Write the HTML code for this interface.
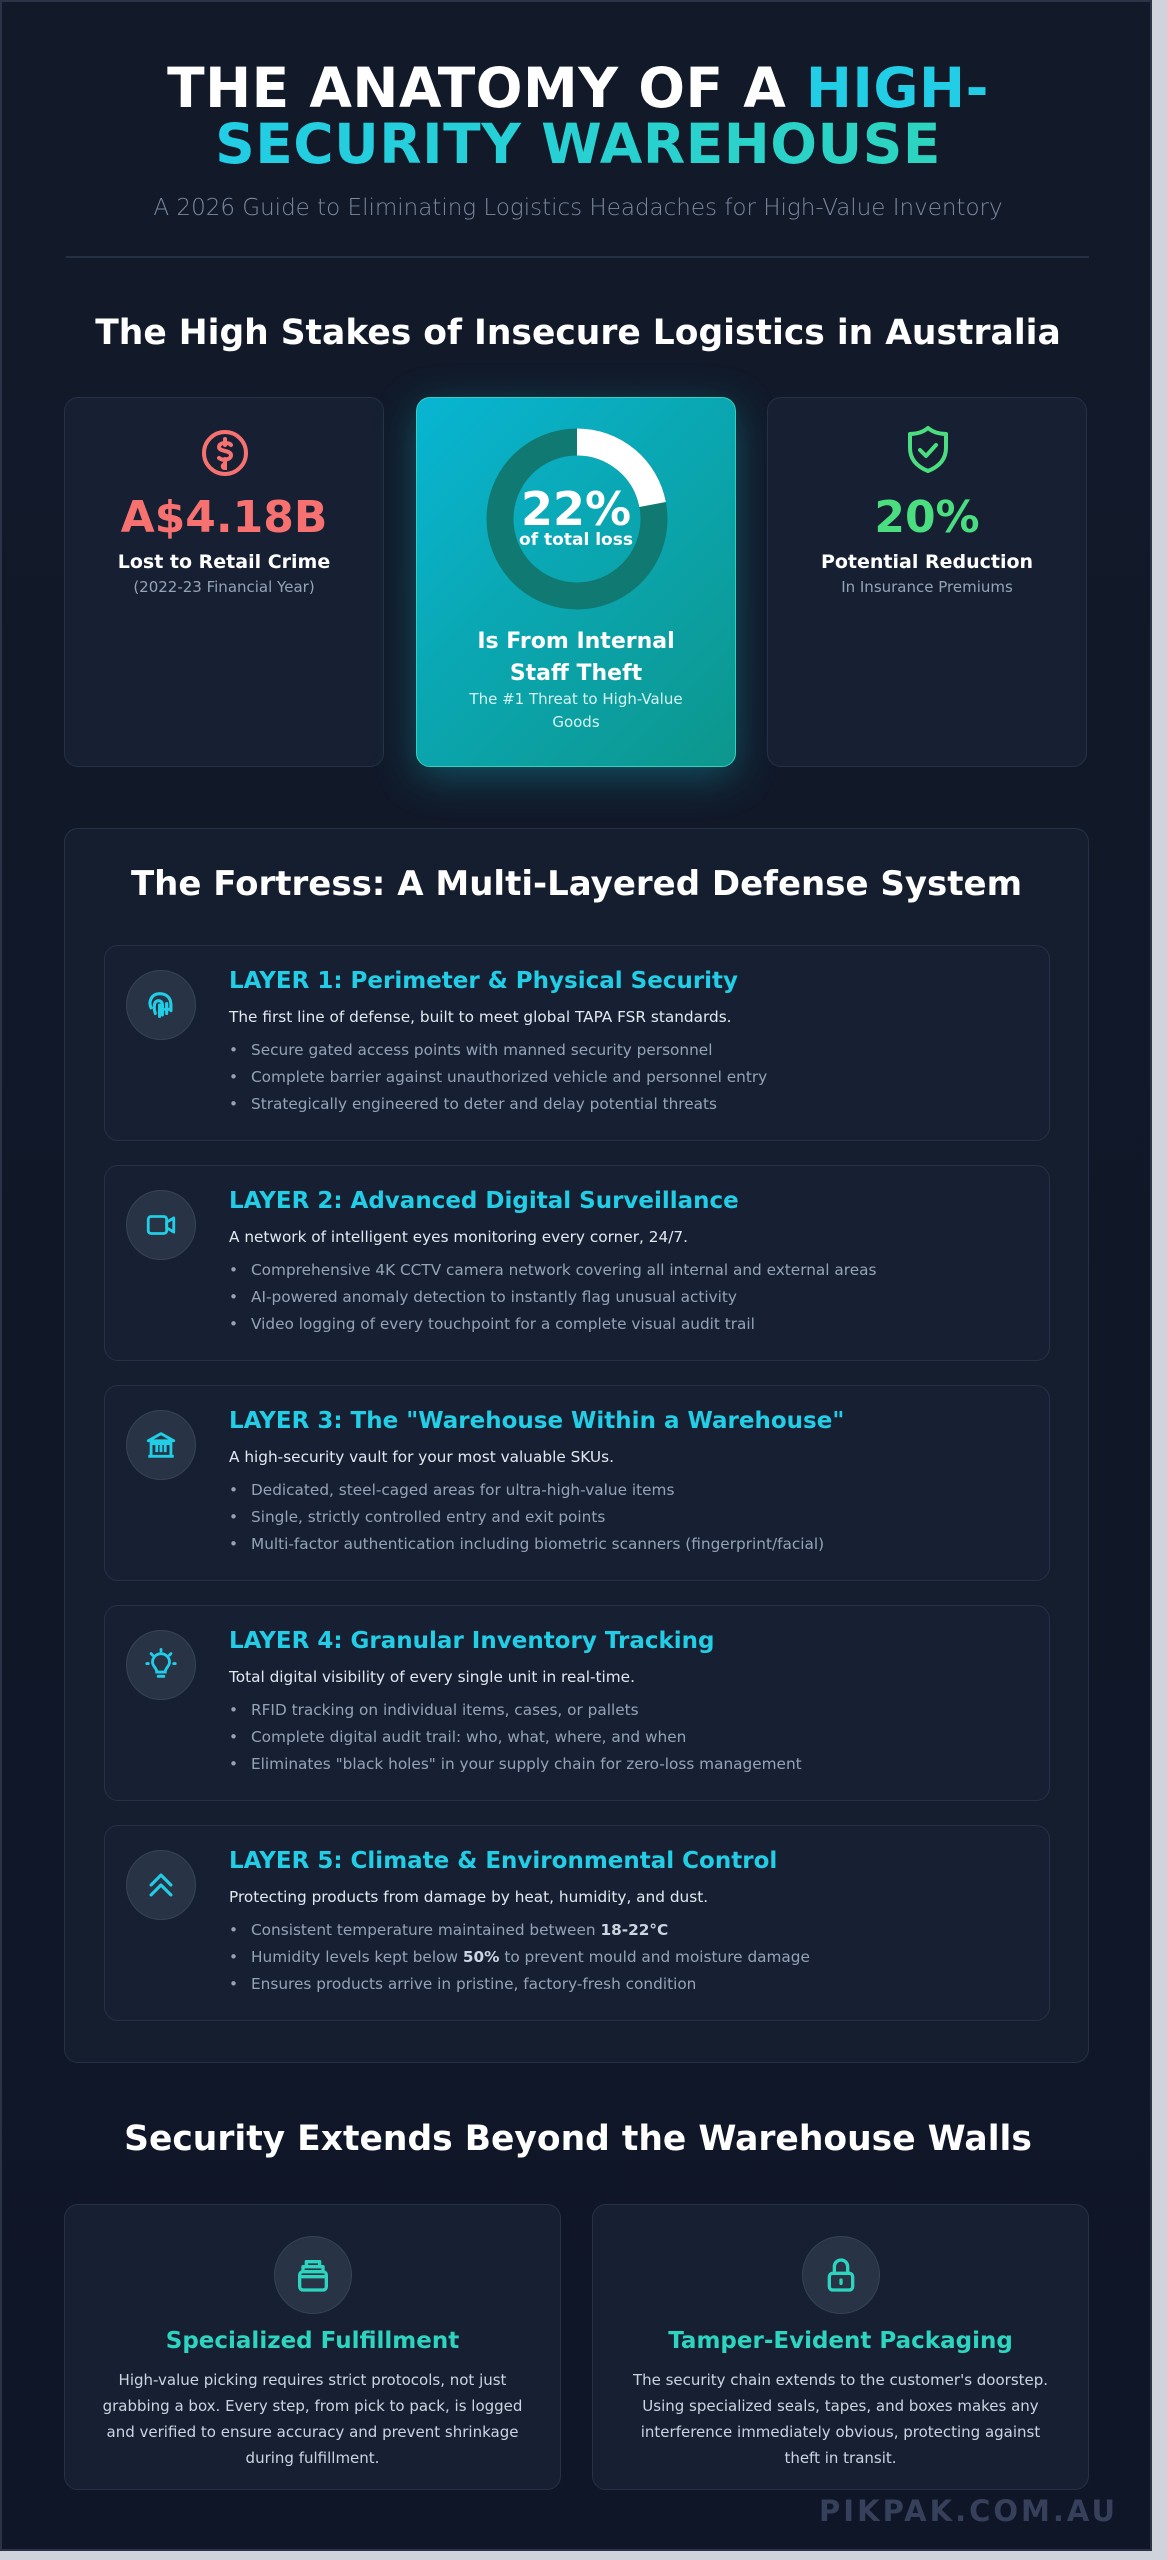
<!DOCTYPE html>
<html><head><meta charset="utf-8"><style>
*{box-sizing:border-box;margin:0;padding:0}
html,body{width:1167px;height:2560px;background:#cfd4dc;overflow:hidden}
body{font-family:"DejaVu Sans","Liberation Sans",sans-serif;position:relative}
.page{position:absolute;left:0;top:0;width:1152px;height:2551px;background:linear-gradient(#121a2a,#0f1627);border:2px solid #2a3446;color:#fff}
.abs{position:absolute}
h1{position:absolute;left:0;width:1152px;top:58px;text-align:center;font-size:55px;line-height:56px;font-weight:bold;letter-spacing:0.5px}
.cy{color:#22cde6}
.sub{top:193px;left:0;width:1152px;text-align:center;font-size:23px;color:#7b8aa0;font-weight:300}
.hr{left:64px;width:1023px;top:254px;height:2px;background:#263043}
h2{position:absolute;left:0;width:1152px;text-align:center;font-size:34.5px;font-weight:bold}
.card{position:absolute;background:#172033;border:1.5px solid #263147;border-radius:14px}
.stat{top:395px;width:320px;height:370px}
.num{position:absolute;left:0;width:100%;text-align:center;font-size:44px;font-weight:bold}
.lbl{position:absolute;left:0;width:100%;text-align:center;font-size:19px;font-weight:bold}
.sml{position:absolute;left:0;width:100%;text-align:center;font-size:15px;color:#94a3b8}
.teal{background:linear-gradient(135deg,#08b5d2,#0d968c);border:1.5px solid #2dd4bf;box-shadow:0 10px 40px rgba(20,184,200,0.35)}
.layer{left:102px;width:946px;height:196px}
.ic{position:absolute;left:21px;top:24px;width:70px;height:70px;border-radius:50%;background:#283446;border:1.5px solid #364357;display:flex;align-items:center;justify-content:center}
.lt{position:absolute;left:124px;top:22px;font-size:23px;font-weight:bold;color:#22cde6}
.ld{position:absolute;left:124px;top:62px;font-size:15.3px;color:#e2e8f0}
.lb{position:absolute;left:124px;top:91px;font-size:15.3px;color:#94a3b8;line-height:27px;list-style:none}
.lb li:before{content:"•";display:inline-block;width:22px;color:#94a3b8}
.lb b{color:#cbd5e1}
.bc{top:2202px;height:286px}
.bic{position:absolute;left:50%;top:31px;margin-left:-39px;width:78px;height:78px;border-radius:50%;background:#283446;border:1.5px solid #364357;display:flex;align-items:center;justify-content:center}
.bt{position:absolute;left:0;width:100%;top:123px;text-align:center;font-size:23px;font-weight:bold;color:#2dd4bf}
.bp{position:absolute;left:30px;right:30px;top:162px;text-align:center;font-size:15px;line-height:26px;color:#cbd5e1}
</style></head><body>
<div class="page">
<h1>THE ANATOMY OF A <span class="cy">HIGH-</span><br><span style="background:linear-gradient(90deg,#22cde6,#2dd4bf);-webkit-background-clip:text;color:transparent">SECURITY WAREHOUSE</span></h1>
<div class="abs sub">A 2026 Guide to Eliminating Logistics Headaches for High-Value Inventory</div>
<div class="abs hr"></div>
<h2 style="top:311px">The High Stakes of Insecure Logistics in Australia</h2>

<div class="card stat" style="left:62px">
 <svg class="abs" style="left:135px;top:30px" width="50" height="50" viewBox="0 0 50 50" fill="none" stroke="#f87171" stroke-width="4" stroke-linecap="round"><circle cx="25" cy="25" r="21"/><path d="M31 17c-2-3-12-3-12 2s12 3 12 8-8 6-12 3M25 11v6M25 31v9c-3 0-3-3 0-4"/></svg>
 <div class="num" style="top:94px;color:#f87171">A$4.18B</div>
 <div class="lbl" style="top:153px">Lost to Retail Crime</div>
 <div class="sml" style="top:180px">(2022-23 Financial Year)</div>
</div>

<div class="card stat teal" style="left:414px">
 <svg class="abs" style="left:69px;top:30px" width="182" height="182" viewBox="0 0 182 182"><circle cx="91" cy="91" r="77" fill="none" stroke="#107a72" stroke-width="27"/><path d="M91 14 A77 77 0 0 1 166.6 76.5" fill="none" stroke="#fff" stroke-width="27"/></svg>
 <div class="num" style="top:84px;font-size:46px;color:#fff">22%</div>
 <div class="lbl" style="top:132px;font-size:17px">of total loss</div>
 <div class="lbl" style="top:228px;font-size:22px;line-height:32px">Is From Internal<br>Staff Theft</div>
 <div class="sml" style="top:290px;color:#d6f5f3;line-height:23px;padding:0 40px">The #1 Threat to High-Value Goods</div>
</div>

<div class="card stat" style="left:765px">
 <svg class="abs" style="left:134px;top:26px" width="52" height="52" viewBox="0 0 52 52" fill="none" stroke="#4ade80" stroke-width="4" stroke-linejoin="round" stroke-linecap="round"><path d="M26 4c6 5 12 6 18 6v14c0 12-8 19-18 23C16 43 8 36 8 24V10c6 0 12-1 18-6z"/><path d="M18 26l6 6 10-11"/></svg>
 <div class="num" style="top:94px;color:#4ade80">20%</div>
 <div class="lbl" style="top:153px">Potential Reduction</div>
 <div class="sml" style="top:180px">In Insurance Premiums</div>
</div>

<div class="card" style="left:62px;top:826px;width:1025px;height:1235px;background:#151e2f">
 <h2 style="left:0;width:100%;top:35px;font-size:34px">The Fortress: A Multi-Layered Defense System</h2>
</div>

<div class="card layer" style="top:943px">
 <div class="ic"><svg width="34" height="34" viewBox="0 0 24 24" fill="none" stroke="#22cde6" stroke-width="2.2" stroke-linecap="round"><path d="M5 14c-2-4 0-10 6-10 5 0 8 3 8 8v4M8 18c-1-3-1-6 0-8 2-2 5-1 5 2v7M11 12v8M16 11v7M15 15h4"/></svg></div>
 <div class="lt">LAYER 1: Perimeter &amp; Physical Security</div>
 <div class="ld">The first line of defense, built to meet global TAPA FSR standards.</div>
 <ul class="lb"><li>Secure gated access points with manned security personnel</li><li>Complete barrier against unauthorized vehicle and personnel entry</li><li>Strategically engineered to deter and delay potential threats</li></ul>
</div>
<div class="card layer" style="top:1163px">
 <div class="ic"><svg width="34" height="34" viewBox="0 0 24 24" fill="none" stroke="#22cde6" stroke-width="2" stroke-linejoin="round"><rect x="3" y="6" width="13" height="12" rx="2"/><path d="M16 10l5-3v10l-5-3z"/></svg></div>
 <div class="lt">LAYER 2: Advanced Digital Surveillance</div>
 <div class="ld">A network of intelligent eyes monitoring every corner, 24/7.</div>
 <ul class="lb"><li>Comprehensive 4K CCTV camera network covering all internal and external areas</li><li>AI-powered anomaly detection to instantly flag unusual activity</li><li>Video logging of every touchpoint for a complete visual audit trail</li></ul>
</div>
<div class="card layer" style="top:1383px">
 <div class="ic"><svg width="34" height="34" viewBox="0 0 24 24" fill="none" stroke="#22cde6" stroke-width="2" stroke-linejoin="round"><path d="M3 9l9-5 9 5zM3 20h18M5 9v11M19 9v11M9 12v5M12 12v5M15 12v5M5 11h14"/></svg></div>
 <div class="lt">LAYER 3: The "Warehouse Within a Warehouse"</div>
 <div class="ld">A high-security vault for your most valuable SKUs.</div>
 <ul class="lb"><li>Dedicated, steel-caged areas for ultra-high-value items</li><li>Single, strictly controlled entry and exit points</li><li>Multi-factor authentication including biometric scanners (fingerprint/facial)</li></ul>
</div>
<div class="card layer" style="top:1603px">
 <div class="ic"><svg width="34" height="34" viewBox="0 0 24 24" fill="none" stroke="#22cde6" stroke-width="2" stroke-linecap="round"><path d="M9 17c0-3-3-4-3-7a6 6 0 0 1 12 0c0 3-3 4-3 7zM10 20h4M2 11h1M21 11h1M5 4l1 1M19 4l-1 1M12 1v1"/></svg></div>
 <div class="lt">LAYER 4: Granular Inventory Tracking</div>
 <div class="ld">Total digital visibility of every single unit in real-time.</div>
 <ul class="lb"><li>RFID tracking on individual items, cases, or pallets</li><li>Complete digital audit trail: who, what, where, and when</li><li>Eliminates "black holes" in your supply chain for zero-loss management</li></ul>
</div>
<div class="card layer" style="top:1823px">
 <div class="ic"><svg width="34" height="34" viewBox="0 0 24 24" fill="none" stroke="#22cde6" stroke-width="2.2" stroke-linecap="round" stroke-linejoin="round"><path d="M5 12l7-7 7 7M5 19l7-7 7 7"/></svg></div>
 <div class="lt">LAYER 5: Climate &amp; Environmental Control</div>
 <div class="ld">Protecting products from damage by heat, humidity, and dust.</div>
 <ul class="lb"><li>Consistent temperature maintained between <b>18-22°C</b></li><li>Humidity levels kept below <b>50%</b> to prevent mould and moisture damage</li><li>Ensures products arrive in pristine, factory-fresh condition</li></ul>
</div>

<h2 style="top:2117px">Security Extends Beyond the Warehouse Walls</h2>
<div class="card bc" style="left:62px;width:497px">
 <div class="bic"><svg width="40" height="40" viewBox="0 0 24 24" fill="none" stroke="#2dd4bf" stroke-width="2" stroke-linejoin="round"><rect x="4" y="10" width="16" height="11" rx="2"/><path d="M6 10V7h12v3M8 7V4h8v3M4 13h16"/></svg></div>
 <div class="bt">Specialized Fulfillment</div>
 <div class="bp">High-value picking requires strict protocols, not just grabbing a box. Every step, from pick to pack, is logged and verified to ensure accuracy and prevent shrinkage during fulfillment.</div>
</div>
<div class="card bc" style="left:590px;width:497px">
 <div class="bic"><svg width="40" height="40" viewBox="0 0 24 24" fill="none" stroke="#2dd4bf" stroke-width="2" stroke-linejoin="round" stroke-linecap="round"><rect x="5" y="11" width="14" height="10" rx="2"/><path d="M8 11V7a4 4 0 0 1 8 0v4M12 15v2"/></svg></div>
 <div class="bt">Tamper-Evident Packaging</div>
 <div class="bp">The security chain extends to the customer's doorstep. Using specialized seals, tapes, and boxes makes any interference immediately obvious, protecting against theft in transit.</div>
</div>
<div class="abs" style="right:32px;top:2492px;font-size:29px;font-weight:bold;color:#36405a;letter-spacing:3px">PIKPAK.COM.AU</div>
</div>
</body></html>
